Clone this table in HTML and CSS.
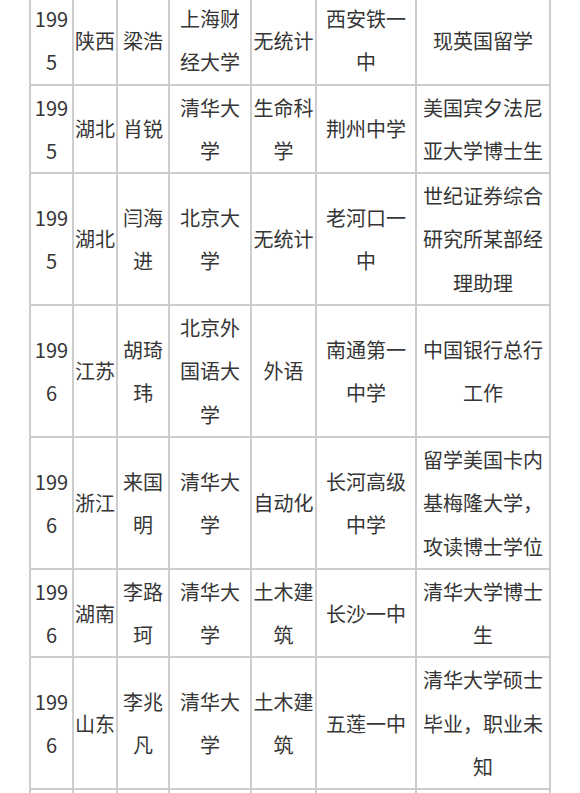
FILE: index.html
```html
<!DOCTYPE html>
<html lang="zh-CN">
<head>
<meta charset="utf-8">
<link rel="stylesheet" href="styles.css">
</head>
<body>
<table class="grid">
  <colgroup>
    <col class="c1"><col class="c2"><col class="c3"><col class="c4"><col class="c5"><col class="c6"><col class="c7">
  </colgroup>
  <tbody>
    <tr><td>1995</td><td>陕西</td><td>梁浩</td><td class="uni">上海财经大学</td><td>无统计</td><td>西安铁一中</td><td>现英国留学</td></tr>
    <tr><td>1995</td><td>湖北</td><td>肖锐</td><td class="uni">清华大学</td><td>生命科学</td><td>荆州中学</td><td>美国宾夕法尼亚大学博士生</td></tr>
    <tr><td>1995</td><td>湖北</td><td>闫海进</td><td class="uni">北京大学</td><td>无统计</td><td>老河口一中</td><td>世纪证券综合研究所某部经理助理</td></tr>
    <tr><td>1996</td><td>江苏</td><td>胡琦玮</td><td class="uni">北京外国语大学</td><td>外语</td><td>南通第一中学</td><td>中国银行总行工作</td></tr>
    <tr><td>1996</td><td>浙江</td><td>来国明</td><td class="uni">清华大学</td><td>自动化</td><td>长河高级中学</td><td>留学美国卡内基梅隆大学，攻读博士学位</td></tr>
    <tr><td>1996</td><td>湖南</td><td>李路珂</td><td class="uni">清华大学</td><td>土木建筑</td><td>长沙一中</td><td>清华大学博士生</td></tr>
    <tr><td>1996</td><td>山东</td><td>李兆凡</td><td class="uni">清华大学</td><td>土木建筑</td><td>五莲一中</td><td>清华大学硕士毕业，职业未知</td></tr>
    <tr><td>&nbsp;</td><td>&nbsp;</td><td>&nbsp;</td><td class="uni">&nbsp;</td><td>&nbsp;</td><td>&nbsp;</td><td>&nbsp;</td></tr>
  </tbody>
</table>
</body>
</html>
```

FILE: styles.css
```css
html, body {
  margin: 0;
  padding: 0;
  background: #ffffff;
  overflow: hidden;
}
body {
  font-family: "Noto Sans CJK SC", "Noto Sans", sans-serif;
  color: #363636;
}
.grid {
  border-collapse: collapse;
  table-layout: fixed;
  width: 522px;
  margin: -5px 0 0 29px;
}
.c1 { width: 43px; }
.c2 { width: 44px; }
.c3 { width: 52px; }
.c4 { width: 82px; }
.c5 { width: 65px; }
.c6 { width: 100px; }
.c7 { width: 134px; }
.grid td {
  border: 2px solid #cdcdcd;
  padding: 0;
  font-size: 20px;
  line-height: 43.3px;
  text-align: center;
  vertical-align: middle;
  word-break: break-all;
}
.grid td.uni {
  padding: 0 1px;
}
```
